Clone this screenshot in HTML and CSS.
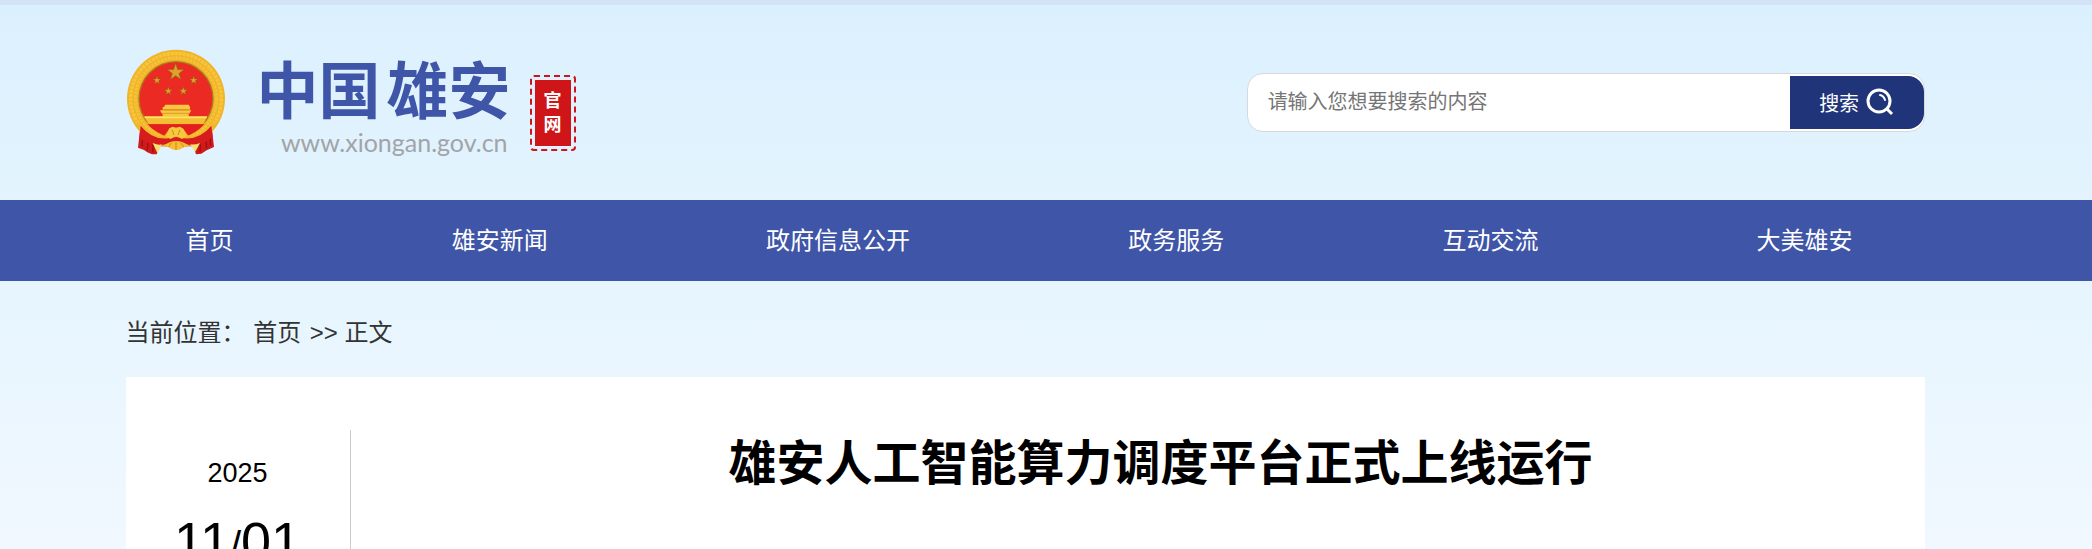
FILE: index.html
```html
<!DOCTYPE html>
<html lang="zh-CN">
<head>
    <meta charset="UTF-8">
    <meta name="viewport" content="width=device-width, initial-scale=1.0">
    <title>雄安人工智能算力调度平台正式上线运行</title>
    <link rel="stylesheet" href="styles.css">
</head>
<body>
    <header class="header">
        <div class="wrap header-inner">
            <a class="logo" href="#">
                <svg class="emblem" viewBox="48 58 300 318" aria-hidden="true">
                    <defs>
                        <path id="star" d="M0-10 2.3-3.1 9.5-3.1 3.7 1.2 5.9 8.1 0 3.8-5.9 8.1-3.7 1.2-9.5-3.1-2.3-3.1z"/>
                    </defs>
                    <!-- 红绶带 -->
                    <path d="M92 284 84 354 102 361 112 368 126 374 140 374 150 350 250 350 258 374 274 372 290 362 312 352 304 284z" fill="#cf1a1c"/>
                    <path d="M100 300 96 350M116 312 112 362M286 312 290 356M298 300 302 348M272 322 270 368M130 322 128 368" stroke="#9d1013" stroke-width="4" fill="none"/>
                    <!-- 麦穗金环 -->
                    <circle cx="198" cy="207" r="147" fill="#f0b429"/>
                    <circle cx="198" cy="207" r="136" fill="none" stroke="#f7c63e" stroke-width="10" stroke-dasharray="9 3"/>
                    <circle cx="198" cy="207" r="122" fill="none" stroke="#f6c238" stroke-width="9" stroke-dasharray="8 3"/>
                    <circle cx="198" cy="207" r="113" fill="#a97b1c"/>
                    <circle cx="198" cy="207" r="109" fill="#ec2a24"/>
                    <g fill="#d9a32c" stroke="#8f5a12">
                        <use href="#star" transform="translate(197 128) scale(2.7)" stroke-width=".6"/>
                        <use href="#star" transform="translate(141 152) scale(1.3)"/>
                        <use href="#star" transform="translate(251 152) scale(1.3)"/>
                        <use href="#star" transform="translate(175 184) scale(1.3)"/>
                        <use href="#star" transform="translate(220 184) scale(1.3)"/>
                    </g>
                    <!-- 天安门 -->
                    <path d="M166 225h70l4 7h-78zM158 232h82v8h-82zM150 242h94l-6 10h-82zM158 252h78v10h-78z" fill="#f8c93f"/>
                    <path d="M162 240h74M156 251h82" stroke="#c9861d" stroke-width="2"/>
                    <path d="M102 260h190l-12 24H116z" fill="#f4bd32"/>
                    <path d="M104 263h186" stroke="#ffe26a" stroke-width="5"/>
                    <path d="M112 284h172q-30 30-62 38h-48q-34-10-62-38z" fill="#e3201f"/>
                    <!-- 齿轮与绶结 -->
                    <path d="M78 272q34 48 84 48l16-22 20-4 22 4 16 22q50 0 82-48l-8 28q-28 32-70 36l-42-4-42 4q-44-4-70-36z" fill="#f2b62c"/>
                    <path d="M92 288q34 44 84 38l22-4 24 4q48 4 82-38l4 34q-34 28-70 24l-40-8-42 8q-40 2-68-22z" fill="#d71c1d"/>
                    <path d="M168 320 178 296 188 291 198 294 210 291 220 297 230 320 216 328 198 318 182 328z" fill="#f7c83d"/>
                    <path d="M128 340q18 8 28 4l-14 26zM240 344q16 2 30-4l-14 26z" fill="#f8e26f"/>
                    <path d="M164 346q34-24 70 0l-14 8q-22 14-42 0z" fill="#f6bd35"/>
                    <path d="M184 340 176 352M198 337v24M212 340 222 352M186 300 192 316M210 300 204 316" stroke="#cf8a1c" stroke-width="3" fill="none"/>
                </svg>
                <span class="logo-text">
                    <span class="logo-name">中国<span class="logo-area">雄安</span></span>
                    <span class="logo-url">www.xiongan.gov.cn</span>
                </span>
                <span class="seal"><span class="seal-text">官网</span></span>
            </a>
            <form class="search">
                <input class="search-input" type="text" placeholder="请输入您想要搜索的内容" aria-label="搜索内容">
                <button class="search-btn" type="button">搜索
                    <svg class="search-icon" viewBox="0 0 28 28" fill="none" stroke="#fff" aria-hidden="true">
                        <circle cx="13" cy="13" r="11" stroke-width="3"/>
                        <path d="M14 7q4 1 5 5" stroke-width="2" stroke-linecap="round"/>
                        <path d="m21 21 5 5" stroke-width="3"/>
                    </svg>
                </button>
            </form>
        </div>
    </header>

    <nav class="nav">
        <div class="wrap nav-list">
            <a href="#">首页</a>
            <a href="#">雄安新闻</a>
            <a href="#">政府信息公开</a>
            <a href="#">政务服务</a>
            <a href="#">互动交流</a>
            <a href="#">大美雄安</a>
        </div>
    </nav>

    <div class="wrap breadcrumb">当前位置： <a href="#">首页</a> &gt;&gt; <span>正文</span></div>

    <main class="wrap article">
        <div class="date">
            <p class="year">2025</p>
            <p class="day">11<span>/</span>01</p>
        </div>
        <h1 class="title">雄安人工智能算力调度平台正式上线运行</h1>
    </main>
</body>
</html>
```
FILE: styles.css
```css
* {
    margin: 0;
    padding: 0;
    box-sizing: border-box;
}

body {
    display: flex;
    flex-direction: column;
    height: 100vh;
    overflow: hidden;
    border-top: 5px solid #d4e2f8;
    background: linear-gradient(#dbf0fe, #e6f5fe 52%, #f1f8ff);
    font-family: "Liberation Sans", "Noto Sans CJK SC", sans-serif;
    font-size: 24px;
    color: #333;
}

a {
    color: inherit;
    text-decoration: none;
}

.wrap {
    width: 86%;
    margin-left: 6%;
}

.header {
    flex: none;
    padding: 44px 0 45px;
}

.header-inner {
    display: flex;
    align-items: center;
    justify-content: space-between;
}

.logo {
    display: flex;
    align-items: center;
}

.emblem {
    width: 100px;
    height: 106px;
}

.logo-text {
    display: flex;
    flex-direction: column;
    align-items: flex-end;
    margin-left: 31px;
    padding-top: 8px;
}

.logo-name {
    font-size: 62px;
    font-weight: bold;
    line-height: 72px;
    color: #3f55a8;
}

.logo-area {
    margin-left: 6px;
}

.logo-url {
    padding-right: 3px;
    font-family: Lato, sans-serif;
    font-size: 25px;
    line-height: 26px;
    color: #a2a4a6;
}

.seal {
    margin: 22px 0 0 19px;
    padding: 3px;
    border: 2px dashed #cf1517;
    border-radius: 4px;
}

.seal-text {
    display: flex;
    align-items: center;
    width: 36px;
    height: 66px;
    padding: 0 9px;
    background: #cf1517;
    color: #fff;
    font-size: 18px;
    font-weight: bold;
    line-height: 24px;
}

.search {
    display: flex;
    width: 678px;
    height: 59px;
    padding: 2px 0;
    border: 1px solid #d8d8dc;
    border-radius: 16px;
    background: #fff;
}

.search-input {
    flex: 1;
    min-width: 0;
    padding: 0 20px;
    border: none;
    outline: none;
    background: transparent;
    font-family: inherit;
    font-size: 20px;
}

.search-input::placeholder {
    color: #757575;
}

.search-btn {
    display: flex;
    align-items: center;
    justify-content: center;
    gap: 7px;
    width: 134px;
    border: none;
    border-radius: 0 16px 16px 0;
    background: #1f3479;
    color: #fff;
    font-family: inherit;
    font-size: 20px;
}

.search-icon {
    width: 28px;
    height: 28px;
}

.nav {
    flex: none;
    background: #3f55a8;
    color: #fff;
}

.nav-list {
    display: flex;
    justify-content: space-between;
    padding: 0 72px 0 60px;
    line-height: 81px;
}

.breadcrumb {
    flex: none;
    padding: 28px 0 20px;
    line-height: 48px;
}

.breadcrumb a {
    margin: 0 2px 0 1px;
}

.article {
    display: flex;
    flex: 1 0 auto;
    padding-top: 53px;
    background: #fff;
    color: #000;
}

.date {
    width: 225px;
    border-right: 1px solid #ccc;
    text-align: center;
}

.year {
    padding-top: 27px;
    font-size: 27px;
    line-height: 32px;
}

.day {
    padding-top: 22px;
    font-size: 54px;
    line-height: 60px;
}

.day span {
    font-size: 40px;
}

.title {
    flex: 1;
    margin-left: 46px;
    font-size: 48px;
    line-height: 68px;
    text-align: center;
}
```
